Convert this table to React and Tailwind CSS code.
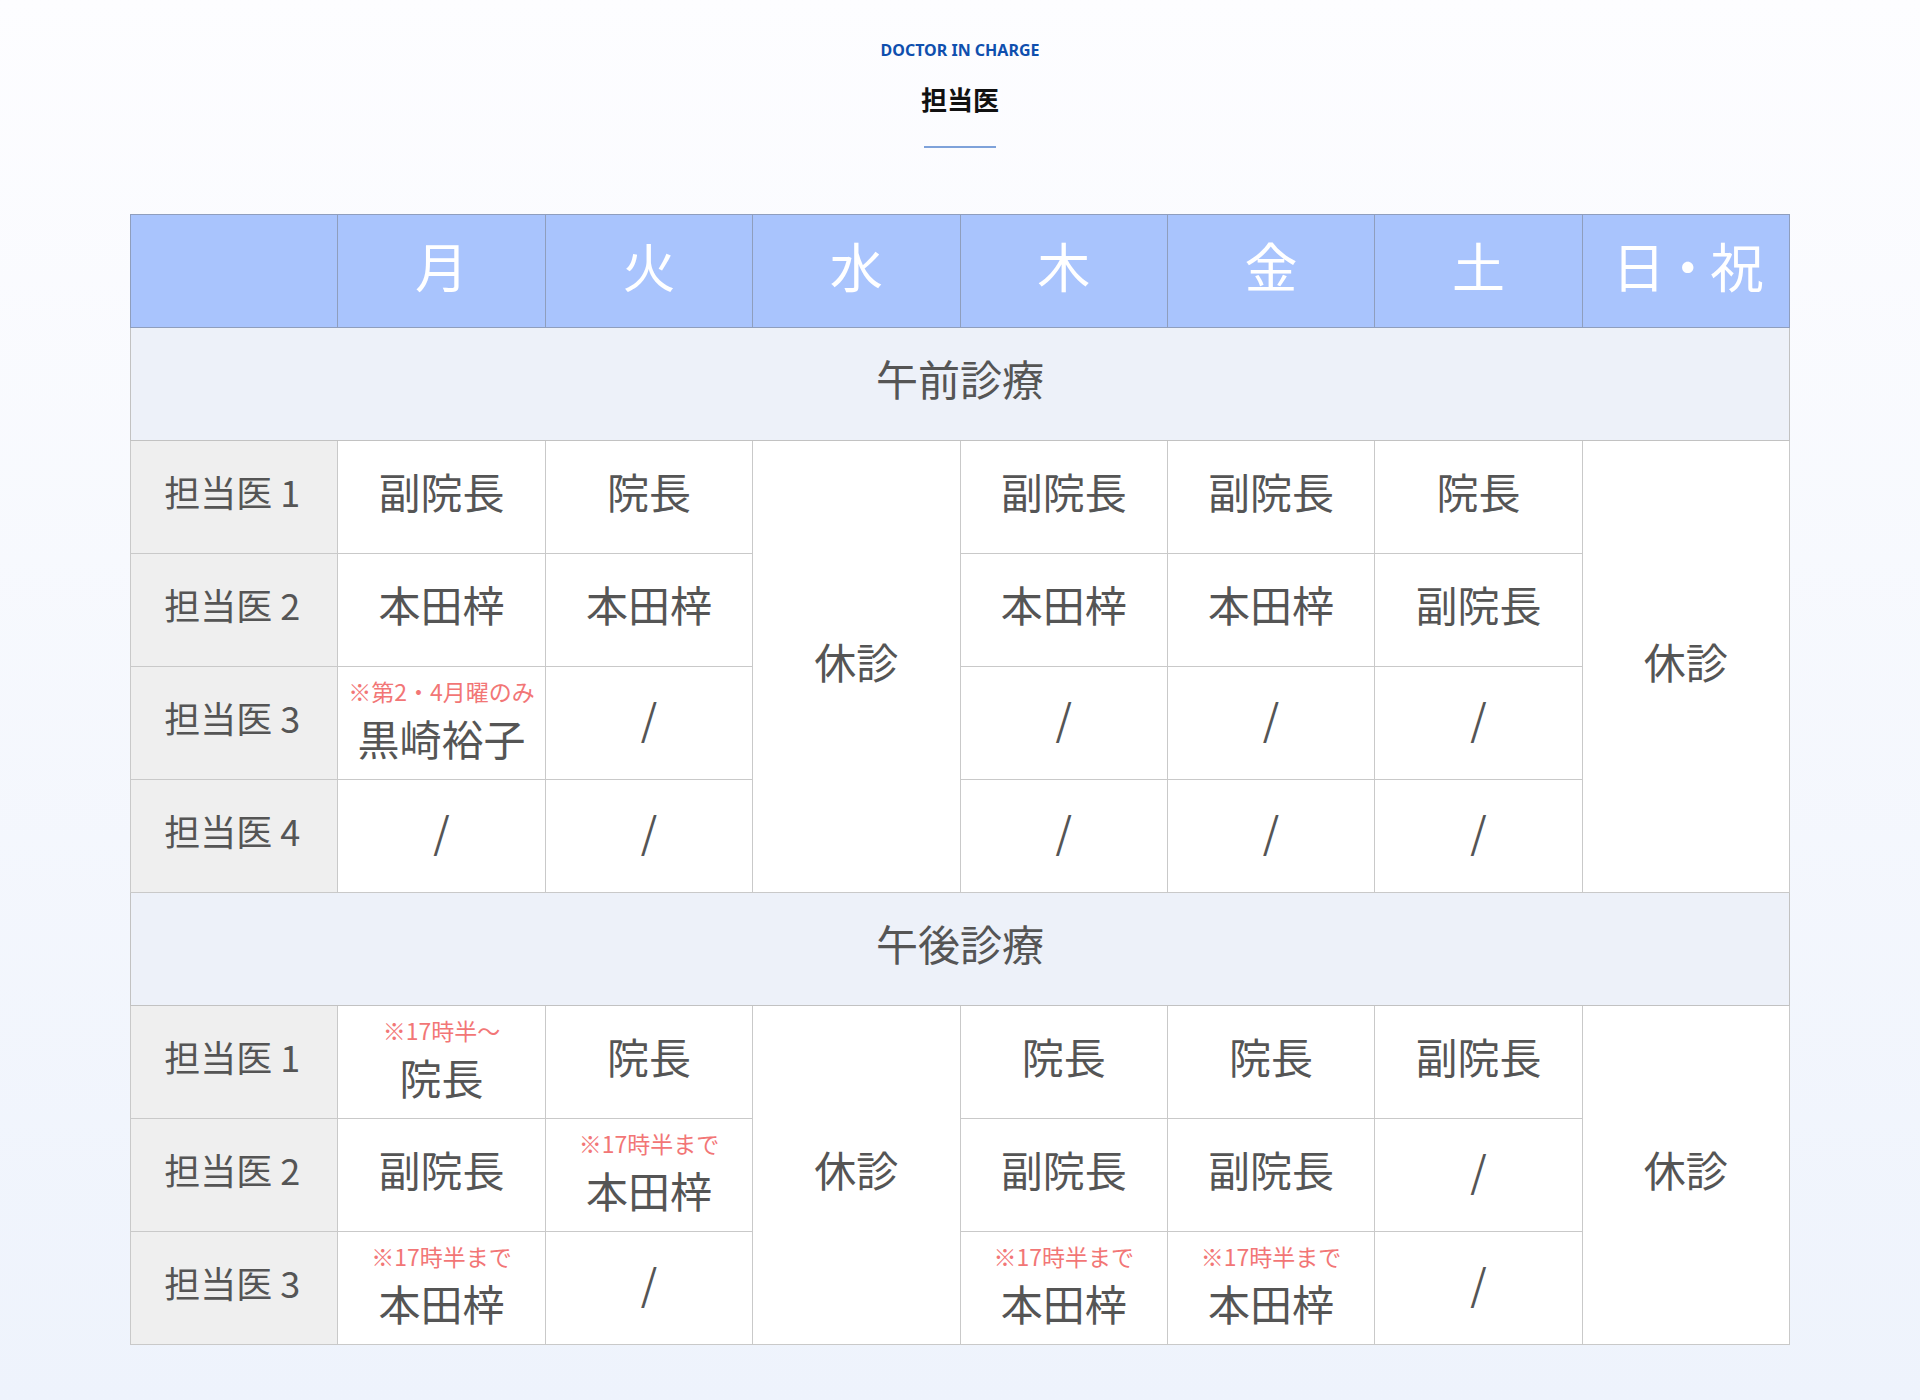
import React from 'react';

const days = ['月', '火', '水', '木', '金', '土', '日・祝'];

// null = covered by the rowSpan'd 休診 cell
const morning = [
  ['副院長', '院長', { closed: 4 }, '副院長', '副院長', '院長', { closed: 4 }],
  ['本田梓', '本田梓', null, '本田梓', '本田梓', '副院長', null],
  [{ note: '※第2・4月曜のみ', name: '黒崎裕子' }, '/', null, '/', '/', '/', null],
  ['/', '/', null, '/', '/', '/', null],
];

const afternoon = [
  [{ note: '※17時半〜', name: '院長' }, '院長', { closed: 3 }, '院長', '院長', '副院長', { closed: 3 }],
  ['副院長', { note: '※17時半まで', name: '本田梓' }, null, '副院長', '副院長', '/', null],
  [{ note: '※17時半まで', name: '本田梓' }, '/', null, { note: '※17時半まで', name: '本田梓' }, { note: '※17時半まで', name: '本田梓' }, '/', null],
];

const cellBase = 'border border-[#c9c9c9] text-center align-middle';

const Cell = ({ value }) => {
  if (value === null) return null;
  if (typeof value === 'object' && value.closed) {
    return (
      <td rowSpan={value.closed} className={`${cellBase} bg-white pb-[12px] text-[42px] leading-none`}>
        休診
      </td>
    );
  }
  if (typeof value === 'object') {
    return (
      <td className={`${cellBase} bg-white`}>
        <div className="flex flex-col items-center">
          <span className="text-[23px] leading-[30px] text-[#f27676]">{value.note}</span>
          <span className="text-[42px] leading-[64px]">{value.name}</span>
        </div>
      </td>
    );
  }
  return <td className={`${cellBase} bg-white pb-[12px] text-[42px] leading-none`}>{value}</td>;
};

const Section = ({ title, rows }) => (
  <>
    <tr className="h-[113px]">
      <td colSpan={8} className="border border-[#c2c2c2] bg-[#edf1f9] pb-[12px] text-center align-middle text-[42px] leading-none">
        {title}
      </td>
    </tr>
    {rows.map((row, i) => (
      <tr key={i} className="h-[113px]">
        <td className={`${cellBase} bg-[#efefef] pr-[4px] pb-[12px] text-[36px] leading-none`}>担当医 {i + 1}</td>
        {row.map((v, j) => (
          <Cell key={j} value={v} />
        ))}
      </tr>
    ))}
  </>
);

const App = () => {
  return (
    <div className="min-h-[1400px] w-full bg-gradient-to-b from-[#fdfdff] to-[#eef3fc] pt-[40px] pb-[57px] font-['Noto_Sans_CJK_JP',sans-serif] text-[#555555]">
      <div className="flex flex-col items-center">
        <p className="font-['Noto_Sans','Noto_Sans_CJK_JP',sans-serif] text-[16px] font-bold leading-[20px] text-[#0f4fae]">
          DOCTOR IN CHARGE
        </p>
        <h2 className="mt-[24px] text-[26px] font-bold leading-[30px] text-[#111111]">担当医</h2>
        <div className="mt-[32px] h-[2px] w-[72px] bg-[#7ea2da]" />
      </div>

      <table className="mx-auto mt-[66px] w-[1660px] table-fixed border-collapse border border-[#bdbdbd]">
        <thead>
          <tr className="h-[113px] bg-[#a9c4fd]">
            <th className="border border-[#8f9ebd]" />
            {days.map((d) => (
              <th
                key={d}
                className={`border border-[#8f9ebd] pb-[12px] text-center align-middle text-[53px] font-normal leading-none text-white ${d === '日・祝' ? 'tracking-[-4px]' : ''}`}
              >
                {d}
              </th>
            ))}
          </tr>
        </thead>
        <tbody>
          <Section title="午前診療" rows={morning} />
          <Section title="午後診療" rows={afternoon} />
        </tbody>
      </table>
    </div>
  );
};

export default App;
